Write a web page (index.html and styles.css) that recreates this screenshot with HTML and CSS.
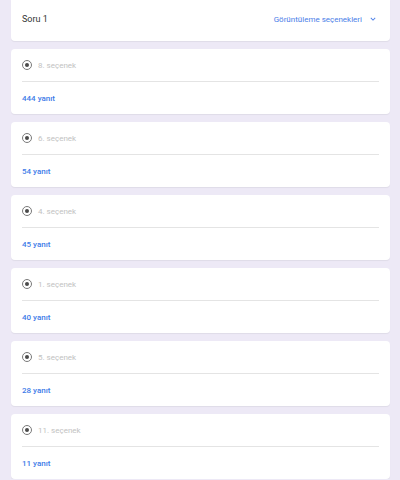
FILE: index.html
```html
<!DOCTYPE html>
<html lang="tr">
<head>
  <meta charset="UTF-8">
  <title>Soru 1</title>
  <link rel="stylesheet" href="styles.css">
</head>
<body>
  <div class="page">
    <div class="card head">
      <span class="title">Soru 1</span>
      <span class="view">Görüntüleme seçenekleri
        <svg width="10" height="10" viewBox="0 0 24 24"><path d="M7.41 8.59 12 13.17l4.59-4.58L18 10l-6 6-6-6z" fill="#4a7ee8"/></svg>
      </span>
    </div>
    <div class="card">
      <div class="opt"><span class="radio"></span><span class="label">8. seçenek</span></div>
      <div class="count">444 yanıt</div>
    </div>
    <div class="card">
      <div class="opt"><span class="radio"></span><span class="label">6. seçenek</span></div>
      <div class="count">54 yanıt</div>
    </div>
    <div class="card">
      <div class="opt"><span class="radio"></span><span class="label">4. seçenek</span></div>
      <div class="count">45 yanıt</div>
    </div>
    <div class="card">
      <div class="opt"><span class="radio"></span><span class="label">1. seçenek</span></div>
      <div class="count">40 yanıt</div>
    </div>
    <div class="card">
      <div class="opt"><span class="radio"></span><span class="label">5. seçenek</span></div>
      <div class="count">28 yanıt</div>
    </div>
    <div class="card">
      <div class="opt"><span class="radio"></span><span class="label">11. seçenek</span></div>
      <div class="count">11 yanıt</div>
    </div>
  </div>
</body>
</html>
```

FILE: styles.css
```css
body { margin: 0; background: #ede9f6; font-family: Roboto, "Open Sans", sans-serif; }
.page { padding: 0 10px 0 11px; display: flex; flex-direction: column; gap: 8px; }
.card { background: #fff; border-radius: 4px; box-shadow: 0 1px 1px rgba(0,0,0,0.06); padding: 0 11px; }
.head { height: 41px; border-radius: 0 0 4px 4px; display: flex; align-items: center; justify-content: space-between; padding-bottom: 3px; box-sizing: border-box; }
.title { font-size: 9px; color: #333; }
.view { font-size: 8px; color: #4a7ee8; display: flex; align-items: center; gap: 6px; margin-right: 1px; }
.opt { height: 33px; display: flex; align-items: center; gap: 6px; border-bottom: 1px solid #e4e4e4; box-sizing: border-box; }
.radio { width: 8px; height: 8px; border: 1.5px solid #7a7a7a; border-radius: 50%; position: relative; }
.radio::after { content: ""; position: absolute; left: 2px; top: 2px; width: 4px; height: 4px; border-radius: 50%; background: #4a4a4a; }
.label { font-size: 8px; color: #c2c2c2; }
.count { height: 32px; display: flex; align-items: center; font-size: 8px; font-weight: 500; color: #3d7be8; }
```
